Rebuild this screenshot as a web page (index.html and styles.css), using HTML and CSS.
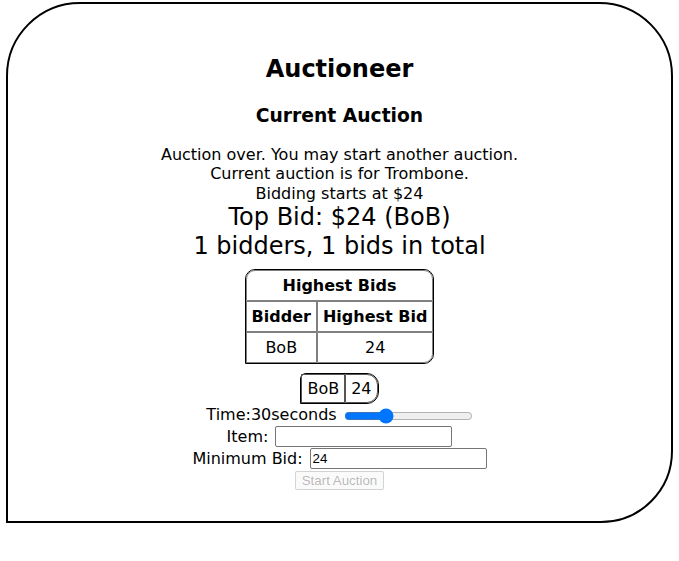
FILE: index.html
```html
<!DOCTYPE html>
<html lang="en">
<head>
<meta charset="utf-8">
<title>Auctioneer</title>
<link rel="stylesheet" href="styles.css">
</head>
<body>
<div class="frame">
  <h1 class="title">Auctioneer</h1>
  <h3 class="subtitle">Current Auction</h3>
  <div class="status">
    <div class="line">Auction over. You may start another auction.</div>
    <div class="line">Current auction is for Trombone.</div>
    <div class="line">Bidding starts at $24</div>
    <div class="big">Top Bid: $24 (BoB)</div>
    <div class="big">1 bidders, 1 bids in total</div>
  </div>
  <table class="bids">
    <tr><th colspan="2">Highest Bids</th></tr>
    <tr><th>Bidder</th><th>Highest Bid</th></tr>
    <tr><td>BoB</td><td>24</td></tr>
  </table>
  <table class="bids mini">
    <tr><td>BoB</td><td>24</td></tr>
  </table>
  <div class="row time-row">
    <span class="label">Time:30seconds</span>
    <input class="slider" type="range" min="0" max="100" value="30">
  </div>
  <div class="row">
    <span class="label">Item:</span>
    <input class="field" type="text" value="">
  </div>
  <div class="row">
    <span class="label">Minimum Bid:</span>
    <input class="field" type="text" value="24">
  </div>
  <div class="row button-row">
    <button class="start" disabled>Start Auction</button>
  </div>
</div>
</body>
</html>
```
FILE: styles.css
```css
html, body {
  background: #ffffff;
}
body {
  margin: 2px 6px 0 6px;
  font-family: "DejaVu Sans", Verdana, sans-serif;
  font-size: 16px;
  color: #000;
}
.frame {
  box-sizing: border-box;
  width: 667px;
  height: 521px;
  border: 2px solid #000;
  border-radius: 74px 74px 72px 0;
  padding-top: 51px;
  text-align: center;
}
.title {
  margin: 0;
  font-size: 24px;
  font-weight: bold;
  line-height: 29px;
}
.subtitle {
  margin: 20px 0 18px 0;
  font-size: 18.72px;
  font-weight: bold;
  line-height: 23px;
}
.line {
  line-height: 19.4px;
  height: 19.4px;
}
.big {
  font-size: 24px;
  line-height: 29.2px;
  height: 29.2px;
}
.bids {
  margin: 7px auto 0 auto;
  border: 1px solid #000;
  border-radius: 10px 10px 10px 0;
  border-spacing: 0;
  font-size: 16px;
}
.bids th, .bids td {
  border: 1px solid #808080;
  padding: 5px;
  line-height: 19px;
}
.bids th:first-child[colspan] {
  border-radius: 9px 9px 0 0;
}
.bids tr:last-child td:last-child {
  border-bottom-right-radius: 9px;
}
.mini {
  margin-top: 9px;
  border-radius: 6px 12px 12px 0;
}
.mini td {
  border-color: #555;
  padding: 4px 5px;
}
.mini tr:last-child td:last-child {
  border-radius: 0 11px 11px 0;
}
.row {
  display: flex;
  justify-content: center;
  align-items: center;
  height: 22px;
  gap: 7px;
}
.label {
  line-height: 18px;
}
.slider {
  width: 129px;
  margin: 2px 0 0 0;
  accent-color: #0075ff;
}
.field {
  box-sizing: border-box;
  width: 177px;
  height: 21px;
  margin: 0;
  padding: 1px 2px;
  border: 1px solid #767676;
  border-radius: 2px;
  font-family: "Liberation Sans", Arial, sans-serif;
  font-size: 13.33px;
  color: #000;
}
.button-row {
  height: 21px;
}
.start {
  box-sizing: border-box;
  height: 19px;
  padding: 0 6px;
  margin: 0;
  font-family: "Liberation Sans", Arial, sans-serif;
  font-size: 13.33px;
  border: 1px solid rgba(118, 118, 118, 0.3);
  border-radius: 2px;
  background: rgba(239, 239, 239, 0.3);
  color: rgba(16, 16, 16, 0.3);
}
```
